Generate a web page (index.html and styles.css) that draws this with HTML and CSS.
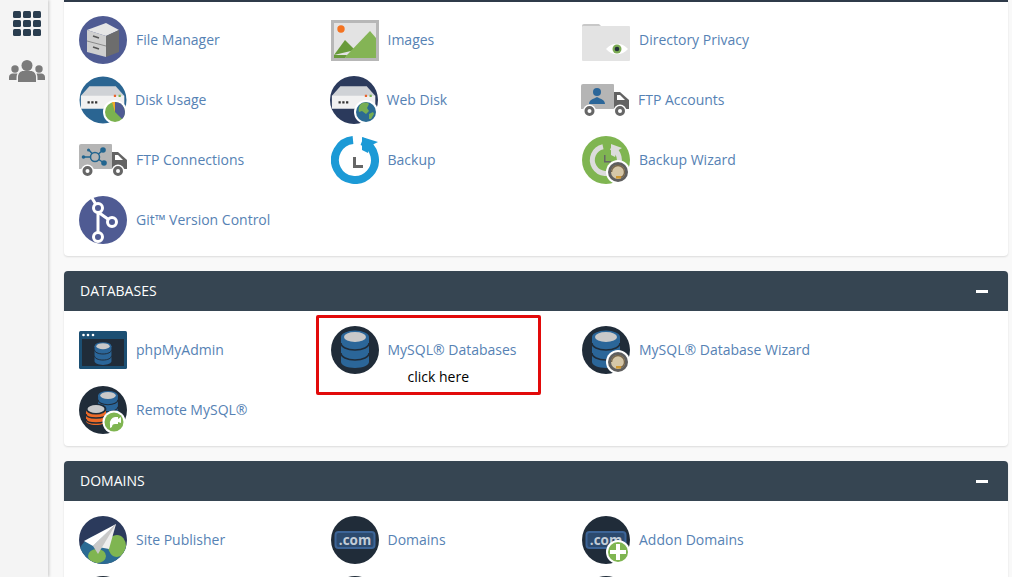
FILE: index.html
```html
<!DOCTYPE html>
<html lang="en">
<head>
    <meta charset="UTF-8">
    <meta name="viewport" content="width=device-width, initial-scale=1.0">
    <title>cPanel</title>
    <link rel="stylesheet" href="styles.css">
</head>
<body>

<!-- shared pieces for the icons -->
<svg class="defs" aria-hidden="true">
    <symbol id="db" viewBox="0 0 48 48">
        <path d="M10 11h28v25c0 3-6 6-14 6s-14-3-14-6z" fill="#2b6699"/>
        <path d="M10 17c0 4 6 7 14 7s14-3 14-7M10 27c0 4 6 7 14 7s14-3 14-7" fill="none" stroke="#202c39" stroke-width="1.600"/>
        <ellipse cx="24" cy="11" rx="14" ry="6.500" fill="#2b6699"/>
        <ellipse cx="24" cy="11" rx="11" ry="5" fill="#c9c9c9"/>
    </symbol>
    <symbol id="truck" viewBox="0 0 48 48">
        <path d="M2 8h30a1 1 0 0 1 1 1v24H0V10a2 2 0 0 1 2-2z" fill="#b5b5b5"/>
        <path d="M33 16h6l9 8v9H33z" fill="#636363"/>
        <path d="M36 19h3l5 5h-8z" fill="#fff"/>
        <circle cx="8.500" cy="35" r="6.500" fill="#fff"/>
        <circle cx="8.500" cy="35" r="3.500" fill="none" stroke="#666" stroke-width="3"/>
        <circle cx="39" cy="35" r="6.500" fill="#fff"/>
        <circle cx="39" cy="35" r="3.500" fill="none" stroke="#666" stroke-width="3"/>
    </symbol>
    <symbol id="server" viewBox="0 0 48 48">
        <path d="M1 22 10 12h28l9 10v10H1z" fill="#cfd2d6"/>
        <path d="M1 22h46v14H1z" fill="#f1f1f1"/>
        <path d="M8 28h2.400v2.400H8zM12 28h2.400v2.400H12zM16 28h2.400v2.400H16z" fill="#333"/>
        <path d="M36 21h2.400v2.400H36z" fill="#e8632c"/>
        <path d="M41 21h2.400v2.400H41z" fill="#7cb552"/>
    </symbol>
    <symbol id="headset" viewBox="0 0 48 48">
        <circle cx="36" cy="36" r="12" fill="#fff"/>
        <circle cx="36" cy="36" r="10" fill="#5f5f5f"/>
        <circle cx="36" cy="36" r="7" fill="#d5c7a8"/>
        <path d="M29.500 36a6.500 6.500 0 0 1 13 0c0 3-2 5-4.500 5.500" fill="none" stroke="#77664a" stroke-width="1.400"/>
        <path d="M34 40h5v2.500h-5z" fill="#d19a34"/>
    </symbol>
</svg>

<aside class="sidebar">
    <svg class="side-grid" viewBox="0 0 28 25">
        <rect x="0" y="0" width="8" height="7" rx="1.500"/><rect x="10" y="0" width="8" height="7" rx="1.500"/><rect x="20" y="0" width="8" height="7" rx="1.500"/>
        <rect x="0" y="9" width="8" height="7" rx="1.500"/><rect x="10" y="9" width="8" height="7" rx="1.500"/><rect x="20" y="9" width="8" height="7" rx="1.500"/>
        <rect x="0" y="18" width="8" height="7" rx="1.500"/><rect x="10" y="18" width="8" height="7" rx="1.500"/><rect x="20" y="18" width="8" height="7" rx="1.500"/>
    </svg>
    <svg class="side-users" viewBox="0 0 36 22">
        <circle cx="18" cy="5.500" r="5.500"/>
        <path d="M9 22v-5c0-4 3-6 5-6h8c2 0 5 2 5 6v5z"/>
        <circle cx="6" cy="9" r="3.700"/>
        <circle cx="30" cy="9" r="3.700"/>
        <path d="M0 20v-3c0-2 2-3.500 3.500-3.500h5C7.500 15 7.500 17 7.500 20zM36 20v-3c0-2-2-3.500-3.500-3.500h-5c1 1.500 1 3.500 1 6.500z"/>
    </svg>
</aside>

<main class="content">

    <section class="panel panel-cut">
        <div class="panel-body">
            <a class="item">
                <svg class="icon" viewBox="0 0 48 48">
                    <circle cx="24" cy="24" r="24" fill="#4f5b93"/>
                    <path d="M8 14 27 7l13 7-13 6z" fill="#e6e6e6"/>
                    <path d="M27 20l13-6v22l-13 5z" fill="#6d6d6d"/>
                    <path d="M8 14l19 6v21L8 36z" fill="#cfcfcf"/>
                    <path d="M8 25l19 5" stroke="#8a8a8a" stroke-width="1"/>
                    <path d="M14 20l6 2M14 31l6 2" stroke="#555" stroke-width="1.500"/>
                </svg>
                <span>File Manager</span>
            </a>
            <a class="item">
                <svg class="icon" viewBox="0 0 48 48">
                    <rect x="0" y="4" width="48" height="41" fill="#b7b7b7"/>
                    <rect x="3" y="7" width="42" height="35" fill="#e3e3e3"/>
                    <circle cx="10" cy="13" r="3.700" fill="#f47321"/>
                    <path d="M3 39 14 24l10 10 z" fill="#689a3a"/>
                    <path d="M16 39 39 15l6 7v20H14z" fill="#84b455"/>
                    <path d="M3 39h13l-2 3H3z" fill="#689a3a"/>
                </svg>
                <span>Images</span>
            </a>
            <a class="item">
                <svg class="icon" viewBox="0 0 48 48">
                    <path d="M0 10a2 2 0 0 1 2-2h15l4 4H0z" fill="#c8c8c8"/>
                    <rect x="0" y="10" width="48" height="35" rx="1" fill="#e3e3e3"/>
                    <path d="M24 33c6-7 16-7 22 0-6 7-16 7-22 0z" fill="#fff"/>
                    <circle cx="35" cy="33" r="4.500" fill="#7cab55"/>
                    <circle cx="35" cy="33" r="2.300" fill="#24323a"/>
                </svg>
                <span>Directory Privacy</span>
            </a>
            <a class="item item-narrow">
                <svg class="icon" viewBox="0 0 48 48">
                    <circle cx="24" cy="24" r="23.500" fill="#2a6592"/>
                    <use href="#server" x="0" y="0" width="48" height="48" transform="translate(1 -1) scale(.94)"/>
                    <circle cx="36" cy="36" r="12" fill="#fff"/>
                    <circle cx="36" cy="36" r="10" fill="#7bb24f"/>
                    <path d="M36 36V26a10 10 0 0 1 7 17z" fill="#4f5b93"/>
                    <path d="M36 36V26h-3z" fill="#efaa2b"/>
                </svg>
                <span>Disk Usage</span>
            </a>
            <a class="item item-left">
                <svg class="icon" viewBox="0 0 48 48">
                    <circle cx="24" cy="24" r="24" fill="#2b3a5c"/>
                    <use href="#server" x="0" y="0" width="48" height="48" transform="translate(1 -1) scale(.94)"/>
                    <circle cx="36" cy="36" r="12" fill="#fff"/>
                    <circle cx="36" cy="36" r="10" fill="#2b6b93"/>
                    <path d="M30 29c3-3 7-3 9-1l-2 4 2 3-3 3-4-3-3 1c-1-3 0-5 1-7zM39 38l4-2 1 2-3 5-2 0z" fill="#76ae53"/>
                </svg>
                <span>Web Disk</span>
            </a>
            <a class="item item-left">
                <svg class="icon" viewBox="0 0 48 48">
                    <use href="#truck" width="48" height="48"/>
                    <circle cx="16" cy="16" r="4" fill="#2b6699"/>
                    <path d="M8 28c0-4 4-5 8-7 4 2 8 3 8 7z" fill="#2b6699"/>
                </svg>
                <span>FTP Accounts</span>
            </a>
            <a class="item">
                <svg class="icon" viewBox="0 0 48 48">
                    <use href="#truck" width="48" height="48"/>
                    <path d="M5 21h11M16 21l8-7M16 21l9 6M10 14l6 7" stroke="#22658f" stroke-width="1.500" fill="none"/>
                    <circle cx="16" cy="21" r="4.500" fill="#b5b5b5" stroke="#22658f" stroke-width="1.500"/>
                    <circle cx="24" cy="14" r="2.800" fill="#22658f"/>
                    <circle cx="25" cy="27" r="2.800" fill="#22658f"/>
                    <circle cx="9.500" cy="14" r="1.500" fill="#22658f"/>
                    <circle cx="4.500" cy="21" r="1.800" fill="#22658f"/>
                </svg>
                <span>FTP Connections</span>
            </a>
            <a class="item">
                <svg class="icon" viewBox="0 0 48 48">
                    <path d="M31 5.300A20 20 0 1 1 22 4.100" fill="none" stroke="#1c9ad6" stroke-width="8"/>
                    <path d="M31 1 47 6 39 10 37 17 31 14z" fill="#1c9ad6"/>
                    <path d="M22 21h3v8h7v3H22z" fill="#666"/>
                </svg>
                <span>Backup</span>
            </a>
            <a class="item">
                <svg class="icon" viewBox="0 0 48 48">
                    <circle cx="24" cy="24" r="24" fill="#7fb551"/>
                    <path d="M29 11.500A13.500 13.500 0 1 1 21 10.800" fill="none" stroke="#dcdcdc" stroke-width="5"/>
                    <path d="M29 8l11 4-5 3-2 6-4-2z" fill="#dcdcdc"/>
                    <path d="M22 19h1.500v6H29v1.500h-7z" fill="#666"/>
                    <use href="#headset" width="48" height="48"/>
                </svg>
                <span>Backup Wizard</span>
            </a>
            <a class="item">
                <svg class="icon" viewBox="0 0 48 48">
                    <circle cx="24" cy="24" r="24" fill="#4f5b93"/>
                    <path d="M13 2 19 12V37M19 16 33 26" fill="none" stroke="#fff" stroke-width="3"/>
                    <circle cx="19" cy="12" r="4.500" fill="#4f5b93" stroke="#fff" stroke-width="3"/>
                    <circle cx="33" cy="26" r="4.500" fill="#4f5b93" stroke="#fff" stroke-width="3"/>
                    <circle cx="19" cy="41" r="4.500" fill="#4f5b93" stroke="#fff" stroke-width="3"/>
                </svg>
                <span>Git™ Version Control</span>
            </a>
        </div>
    </section>

    <section class="panel">
        <header class="panel-head">
            <h2>DATABASES</h2>
            <span class="collapse"></span>
        </header>
        <div class="panel-body">
            <a class="item">
                <svg class="icon" viewBox="0 0 48 48">
                    <rect x="0" y="5" width="48" height="38" rx="1.500" fill="#1c4f73"/>
                    <rect x="3" y="13" width="42" height="27" fill="#202c39"/>
                    <circle cx="4.500" cy="9" r="1.300" fill="#fff"/><circle cx="9" cy="9" r="1.300" fill="#fff"/><circle cx="14" cy="9" r="1.300" fill="#fff"/>
                    <use href="#db" x="9.500" y="13.500" width="29" height="29"/>
                </svg>
                <span>phpMyAdmin</span>
            </a>
            <a class="item">
                <svg class="icon" viewBox="0 0 48 48">
                    <circle cx="24" cy="24" r="24" fill="#202c39"/>
                    <use href="#db" width="48" height="48"/>
                </svg>
                <span>MySQL® Databases</span>
            </a>
            <a class="item">
                <svg class="icon" viewBox="0 0 48 48">
                    <circle cx="24" cy="24" r="24" fill="#202c39"/>
                    <use href="#db" width="48" height="48"/>
                    <use href="#headset" width="48" height="48"/>
                </svg>
                <span>MySQL® Database Wizard</span>
            </a>
            <a class="item">
                <svg class="icon" viewBox="0 0 48 48">
                    <circle cx="24" cy="24" r="24" fill="#202c39"/>
                    <use href="#db" x="12" y="1.700" width="34" height="34"/>
                    <path d="M7 23h20v12c0 2-4 4-10 4S7 37 7 35z" fill="#ee6a27"/>
                    <path d="M7 28c0 3 4 4 10 4s10-1 10-4M7 33c0 3 4 4 10 4s10-1 10-4" fill="none" stroke="#202c39" stroke-width="1.400"/>
                    <ellipse cx="17" cy="23" rx="10.500" ry="5.500" fill="#202c39"/>
                    <ellipse cx="17" cy="23" rx="8.500" ry="4" fill="#c9c9c9"/>
                    <circle cx="35" cy="36" r="11.500" fill="#fff"/>
                    <circle cx="35" cy="36" r="9.500" fill="#7fb551"/>
                    <path d="M31 38a6 6 0 0 1 5-7h3v2l3-2v6l-3-1v2h-3a3 3 0 0 0-3 3l-2 1z" fill="#fff"/>
                </svg>
                <span>Remote MySQL®</span>
            </a>
            <!-- annotation someone drew on top of the screenshot -->
            <div class="callout"><span>click here</span></div>
        </div>
    </section>

    <section class="panel">
        <header class="panel-head">
            <h2>DOMAINS</h2>
            <span class="collapse"></span>
        </header>
        <div class="panel-body">
            <a class="item">
                <svg class="icon" viewBox="0 0 48 48">
                    <clipPath id="globe"><circle cx="24" cy="24" r="24"/></clipPath>
                    <circle cx="24" cy="24" r="24" fill="#2b3a5c"/>
                    <g clip-path="url(#globe)">
                        <circle cx="24" cy="44" r="26" fill="#2b6b93"/>
                        <ellipse cx="18" cy="40" rx="9" ry="7" fill="#7fb551"/>
                        <ellipse cx="38" cy="30" rx="9" ry="11" fill="#7fb551"/>
                    </g>
                    <path d="M37 8 5 25l9 5z" fill="#fff"/>
                    <path d="M37 8 14 30l16 3z" fill="#eeeeee"/>
                    <path d="M37 8 14 30l5 8 3-5z" fill="#c9c9c9"/>
                </svg>
                <span>Site Publisher</span>
            </a>
            <a class="item">
                <svg class="icon" viewBox="0 0 48 48">
                    <circle cx="24" cy="24" r="24" fill="#202c39"/>
                    <rect x="4.500" y="16" width="39" height="16" rx="3" fill="#2c4a6e" stroke="#3c6497" stroke-width="2"/>
                    <text x="24" y="29" text-anchor="middle" class="com-text">.com</text>
                </svg>
                <span>Domains</span>
            </a>
            <a class="item">
                <svg class="icon" viewBox="0 0 48 48">
                    <circle cx="24" cy="24" r="24" fill="#202c39"/>
                    <rect x="4.500" y="16" width="39" height="16" rx="3" fill="#2c4a6e" stroke="#3c6497" stroke-width="2"/>
                    <text x="24" y="29" text-anchor="middle" class="com-text">.com</text>
                    <circle cx="36" cy="36" r="12" fill="#fff"/>
                    <circle cx="36" cy="36" r="10" fill="#7fb551"/>
                    <path d="M34 28h4v6h6v4h-6v6h-4v-6h-6v-4h6z" fill="#fff"/>
                </svg>
                <span>Addon Domains</span>
            </a>
            <!-- next row, only the top of the icons shows -->
            <a class="item">
                <svg class="icon" viewBox="0 0 48 48"><circle cx="24" cy="24" r="24" fill="#202c39"/></svg>
            </a>
            <a class="item">
                <svg class="icon" viewBox="0 0 48 48"><circle cx="24" cy="24" r="24" fill="#202c39"/></svg>
            </a>
            <a class="item">
                <svg class="icon" viewBox="0 0 48 48"><circle cx="24" cy="24" r="24" fill="#202c39"/></svg>
            </a>
        </div>
    </section>

</main>

</body>
</html>
```

FILE: styles.css
```css
html, body {
    margin: 0;
    height: 577px;
    overflow: hidden;
}

body {
    display: flex;
    font-family: "Open Sans", sans-serif;
    font-size: 14px;
    background: #f9f9f9;
}

.defs {
    display: none;
}

/* Left rail */
.sidebar {
    flex: none;
    width: 48px;
    height: 577px;
    display: flex;
    flex-direction: column;
    align-items: center;
    background: #f4f4f4;
    box-shadow: 1px 0 3px rgba(0, 0, 0, 0.2);
}

.side-grid {
    width: 28px;
    height: 25px;
    margin: 11px 0 0 6px;
    fill: #2a3d4f;
}

.side-users {
    width: 36px;
    height: 22px;
    margin: 24px 0 0 6px;
    fill: #7b7b7b;
}

/* Panels */
.content {
    flex: 1;
    padding: 0 4px 0 16px;
}

.panel {
    margin-bottom: 15px;
    background: #fff;
    border-radius: 4px;
    box-shadow: 0 1px 2px rgba(0, 0, 0, 0.12);
}

.panel-cut {
    border-top: 2px solid #2f3b4a;
    border-radius: 0 0 4px 4px;
}

.panel-head {
    height: 40px;
    display: flex;
    align-items: center;
    justify-content: space-between;
    padding: 0 20px 0 16px;
    background: #364552;
    border-radius: 4px 4px 0 0;
}

.panel-head h2 {
    margin: 0 0 2px;
    font-size: 14px;
    font-weight: 400;
    color: #fff;
}

.collapse {
    width: 12px;
    height: 3px;
    background: #fff;
}

.panel-body {
    position: relative;
    display: grid;
    grid-template-columns: repeat(3, 251.5px);
    padding: 9px 15px 6px;
}

.panel-cut .panel-body {
    padding-top: 8px;
}

/* One feature link */
.item {
    height: 60px;
    display: flex;
    align-items: center;
    gap: 9px;
    color: #5682b4;
}

.item span {
    margin-bottom: 2px;
}

.item-narrow {
    gap: 8px;
}

.item-left {
    margin-left: -1px;
}

.icon {
    flex: none;
    width: 48px;
    height: 48px;
}

.com-text {
    font-family: "Open Sans", sans-serif;
    font-size: 13.500px;
    font-weight: 700;
    fill: #c3cdd8;
}

/* Red box around MySQL Databases */
.callout {
    position: absolute;
    left: 251.500px;
    top: 3.500px;
    width: 219px;
    height: 74px;
    border: 3px solid #e20a0a;
    border-radius: 2px;
    color: #000;
}

.callout span {
    position: absolute;
    left: 89px;
    top: 50px;
    font-size: 14px;
    line-height: 18px;
}
```
